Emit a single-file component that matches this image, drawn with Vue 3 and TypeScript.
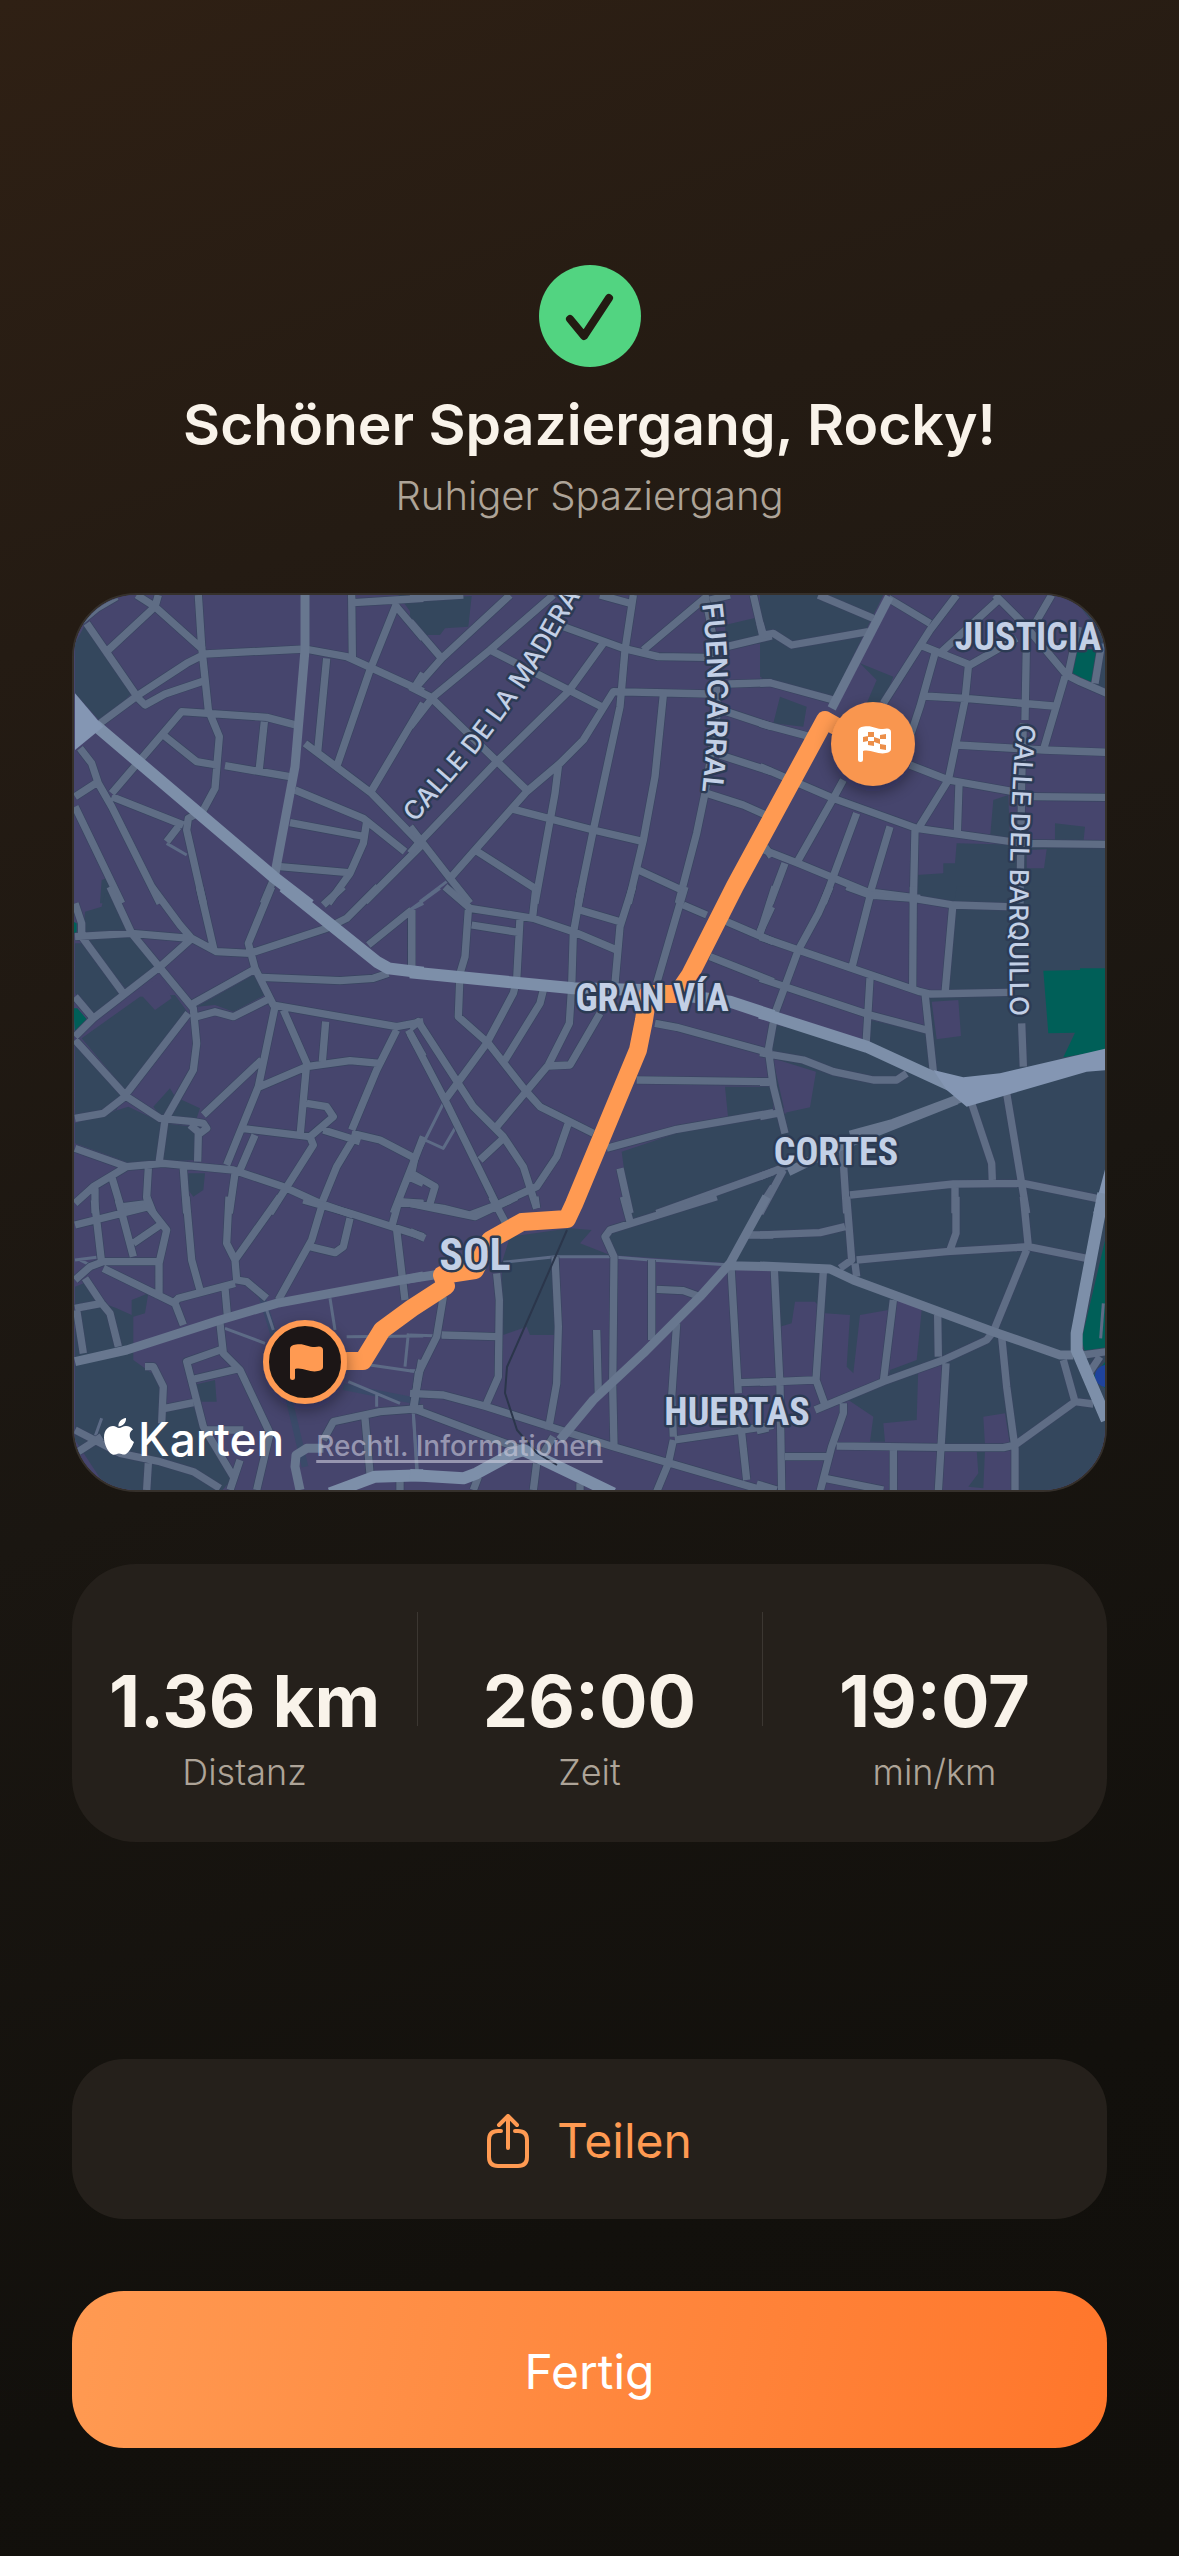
<script setup lang="ts">
interface Tile {
  x: number
  y: number
  slate: string
  block?: string
  park?: string
  dark?: string
  streets: string
  lanes?: string
  roads?: string
  avenues?: string
  plaza?: string
}

interface Stat {
  value: string
  label: string
}

// Every tile is drawn on a grid three times finer than the map itself.
const tiles: Tile[] = [
  {
    x: 60,
    y: 580,
    slate:
      'M45 190L75 135L215 340L125 430L45 340ZM1015 45H1090V150ZM125 900L150 890L185 970H120Z',
    streets:
      'M50 135L110 85L170 50M80 130L235 355L255 375L315 342L440 300M230 45L285 80L145 210M295 45L285 80L430 210M415 45L425 200L445 390L478 470L465 625L430 690L385 715L380 750L430 970M120 430L235 345L380 250L435 222L735 207L860 230L1090 335M875 45L877 230M800 235L773 515M880 68L1010 60L1090 55M1010 70L930 270L830 560M1005 75L1090 175M1090 370L930 640M1090 280L1065 320M735 490L935 640L1090 800M155 640L365 395L620 412L715 437M310 465L410 545L470 555M613 425L597 575M495 557L690 590M60 505L95 550L115 610L155 680L300 970M155 650L370 735M45 650L115 605M45 680L185 970M355 740L320 785M705 630L910 715L1035 815M690 728L905 768M920 725L910 790L870 880L805 970M660 860L865 878M640 900L610 970M1090 790L915 965',
    lanes: 'M320 790L380 825',
    roads: 'M735 45V210L705 560L645 880',
    avenues: 'M105 435L640 890L750 975',
    plaza: 'M45 340L130 440L45 510Z'
  },
  {
    x: 410,
    y: 580,
    slate:
      'M0 60L185 48L175 140L105 145L90 165L45 165L0 110ZM945 135L1050 110L1085 90V300H1055V190L950 200Z',
    streets:
      'M0 55L160 45M300 45L95 235L20 320M430 45L240 210L70 350L0 440M0 125L95 235M0 320L60 350L350 630M240 210L575 380M460 140L640 205L745 230L885 232M570 45L660 70M670 45L645 210L630 380L550 750L505 970M580 190L475 335L260 545L30 785L0 820M900 342L610 335L520 480L450 550L350 635L195 810L120 895M0 740L120 895L180 970M445 560L435 640L375 970M300 685L550 750L700 785M195 810L375 925M760 345L735 590L700 780L655 970M685 870L815 930M885 640L860 760L805 970M890 640L1000 675L1090 715M700 210L890 50M900 60L960 45M885 45L915 200L922 400L885 640M1030 45L1060 175M950 200L1085 168M955 312L1085 308M950 395L1085 440M930 525L1085 575M1065 800L1085 830',
    lanes: 'M110 905L30 965'
  },
  {
    x: 760,
    y: 580,
    slate:
      'M0 45H370L215 360L30 300L0 290ZM60 350L140 380L130 440L40 430ZM300 250L400 290L370 365L320 370L350 300ZM700 660L745 645L750 780L690 775ZM885 730L975 740L970 790H885ZM590 790L1040 800V970H470V885L550 880V850H585ZM955 75L1040 120V330L1000 310V130Z',
    block: 'M800 810L860 808L852 865H800Z',
    park: 'M950 205L1018 210L995 310L930 282Z',
    streets:
      'M175 45L340 115M0 130L10 165L40 160L95 195L325 155M0 310L30 308L220 360M0 430L150 470M0 560L220 655L470 745L790 790L1040 793M385 55L510 130M590 45L510 150L370 370M480 195L630 255L770 175M715 60L545 215M705 45L790 130L920 285L960 305L1040 340M875 45L820 140M800 150L795 420M955 140L925 280M1025 190L1005 310M525 220L480 380L450 470M625 260L615 360L565 600L475 745M490 348L615 355L880 378M915 290L850 510M590 495L850 510L1040 517M450 555L565 600L760 635M820 650L1040 652M597 610L592 760M790 430L785 600L780 970M250 600L220 655L115 840M290 700L190 970M390 740L330 940M465 750L460 970M0 805L115 850L320 935L480 955M75 850L30 970',
    roads: 'M388 50L215 385'
  },
  {
    x: 60,
    y: 890,
    slate:
      'M75 65L125 50L135 10L155 15L210 125L70 130ZM80 150L210 140L290 230L200 300ZM45 160H65L185 320L100 380L45 310ZM65 445L240 320L345 315L385 370L200 605ZM45 455L190 610L170 660L45 690ZM410 350L580 255L615 315L520 365L465 345ZM280 650L330 595L345 620L420 655L410 685L310 690ZM45 700L205 650L310 700L400 710L410 810L210 820L45 760ZM385 850H435L430 900L400 920L385 900Z',
    block: 'M235 305L300 255L335 325L285 360Z',
    park: 'M40 95L50 100V130H40ZM40 355H52L84 392L45 425Z',
    streets:
      'M150 -10L215 130L400 355L410 460L400 540L315 690L297 820M45 40L65 100L65 140L190 310M45 140L215 130L390 145M275 -10L360 105L395 145L470 185L570 190L800 115L860 85L955 -10M390 150L300 230L100 385L45 440M418 -10L462 180M635 -10L565 160L585 235L640 345L1010 410L1090 395M400 340L580 240M410 380L465 365L520 380L630 325M605 262L840 272L940 265L985 250M850 -10L790 45M1055 60L925 165M1055 60V235M45 320L100 385M45 450L200 620L300 685L400 695L430 700L440 715L420 730L390 705M45 685L130 670L195 620M385 370L200 610M605 510L430 675M645 350L595 590L500 825M670 360L740 520L720 740M600 590L740 530L870 512L960 520M797 395L787 515M1010 420L950 540L875 720M1045 420L1090 500M740 640L800 650L820 680L750 740L545 715M750 740L760 765L630 970M415 730L413 815M585 735L540 840M790 720L870 745L900 755M875 730L960 750L1065 805M875 755L830 830L785 940M45 775L200 830M45 940L100 890L200 830L310 820L520 840L670 890L780 940L880 975M105 895V970M155 860L188 970M265 835L260 920L280 970M190 950L265 940M370 835L380 970M525 850L508 970M1090 740L1065 805L1000 970M1045 860L1090 880M1020 935L1090 940',
    lanes: 'M1050 60L1090 40',
    avenues: 'M670 -10L950 215L985 235L1090 248'
  },
  {
    x: 410,
    y: 890,
    slate: 'M635 785L800 730L955 690L945 590H1090V970H660Z',
    streets:
      'M105 -10L180 55L370 85L490 125L620 180M378 -10L368 80M515 -10L490 130L485 290L478 400L415 525L260 710M668 -10L630 110L615 280M510 60L630 95M175 60L165 200L150 250L145 380L235 460L345 600L390 650L470 690L550 730M185 105L325 127M330 85L320 270L310 310L230 460L105 630M400 300L390 340L285 510M570 370L480 525L415 528M825 -10L810 40L740 280M820 45L890 75M950 95L1090 155M1085 50L1050 125M900 200L1090 275M735 400L800 412L1085 490M680 570L1085 575M590 775L800 718L1090 668M5 60V235M0 415L25 395L190 650L280 740L340 830L380 955M0 430L110 640L260 945M210 810L280 745M475 700L440 800L380 890L260 945M0 805L15 800L5 850L75 890L60 940M0 940L100 955L180 975L300 930M630 835L660 970M740 970L1090 845M1040 970L1090 890',
    lanes: 'M0 60L90 -5M100 640L45 750L100 775L135 715M45 750L10 820',
    avenues: 'M0 247L490 295L700 300L960 335L1090 378'
  },
  {
    x: 760,
    y: 890,
    slate:
      'M30 400L320 470L330 390L500 430L510 320L555 300L580 60L590 -10H1040V970H0V690L80 670L30 590Z',
    block: 'M38 505L168 545L150 652L75 668ZM515 335L595 330L603 438L530 448Z',
    park: 'M850 242L960 240V235H1040V480L910 502L945 428L865 430Z',
    streets:
      'M45 -10L0 130M210 -10L175 70L115 180L45 370L25 480L40 590L75 730M330 20L275 235M260 -10L330 15L460 25L580 45L740 50M460 -10L458 295M578 50L555 310M0 140L115 180L480 305L510 312L745 307M0 265L330 375L500 420M330 265L318 465M495 310L520 545M785 400L790 530M0 488L130 510L220 545L340 570L410 570L440 550M0 577H28M0 680L50 670M635 640L695 820L697 870M740 610L800 970M245 740L260 970M270 915L580 882L790 880L1010 925M585 890V970M0 860L100 820M70 840L0 970',
    roads: 'M85 845L250 765L590 630M270 735L400 700L600 625',
    avenues: 'M0 368L320 470L570 585',
    plaza:
      'M520 540L610 562L720 550L1040 475V540L980 545L620 650L560 600ZM1040 820L1000 970H1050Z'
  },
  {
    x: 60,
    y: 1200,
    slate:
      'M45 260L75 248L130 310L170 325L215 345V300L265 280L255 340L220 350V480L290 530L310 630L400 620L430 680L520 830L480 880H150L45 720ZM400 555L465 540L470 605H415Z',
    dark: 'M600 270L640 400L690 610L735 800M850 560L1080 605',
    streets:
      'M103 0L125 190M175 0L220 170M45 75L265 20L320 90L297 190V295M260 -10L265 20M45 240L90 200L130 185L300 185M220 130L300 75M378 -10L395 180L420 270M507 -10L500 130L525 180L530 240L560 245L620 295M660 -10L525 180M730 0L870 40L1090 110M785 20L755 120L655 300M750 140L825 158L850 140L870 55M1020 -10L995 80M1010 90L1035 300M1010 10H1090M130 205L345 310L370 375M345 305L355 295L525 250M495 265L502 345M75 235L125 310L150 340L175 440M45 325L125 310M50 330L70 460M480 370L490 460L540 510L630 700L590 870M480 450L380 485L430 680L520 830M390 540L540 505M255 500H280L310 560L305 670M315 625L400 608M45 690L180 760L300 785L400 815L480 865M265 790L260 870M55 755L125 710M430 690H550M540 780L510 870M1085 480L1060 620M790 720L820 665L960 635L1090 625M915 655L930 820M1020 830V870',
    lanes:
      'M495 385L615 430M810 295L825 390M860 410L1090 408M930 495L1090 518M1045 400L1035 500M865 545L1020 610M950 580V620M1060 640L1070 810M620 330L640 390M125 655L105 710M45 180L110 172M60 180L100 200',
    roads: 'M45 485L200 450L480 360L650 310L1090 228M790 745H740L708 765L705 800L720 870',
    avenues: 'M810 880L945 830L1090 826'
  },
  {
    x: 410,
    y: 1200,
    slate:
      'M275 190L300 110L480 85L545 90L510 130L600 165L435 170V405H360L350 380L280 405ZM660 0H1090V190H960L600 165L580 100L660 60Z',
    streets:
      'M0 10L195 50L320 -10M0 95L45 115M245 -10L285 65M375 -10L380 25M640 -10L660 65M920 -10L600 90L585 110L612 170L608 560L612 740M1010 105H1090M435 170L445 380L440 550L415 690M725 180V420M740 268L820 272L870 290M963 200L985 580M990 548L1090 545M800 370L785 590L790 710M260 220L268 300L265 530L230 610M100 290L80 410L25 520L10 640M95 405L260 410M560 390L565 580M0 580L100 585L230 620L420 680L610 740L1090 880M0 622L340 750M795 720L1090 676M790 720L775 790L740 875M995 700L1010 840M430 710L400 760M380 790L370 870M205 830L190 870M510 850V870',
    lanes:
      'M280 187L435 170H600L720 180L960 195M0 405L95 408M0 512H20M10 640L22 810',
    roads: 'M1070 -10L960 190L870 290L700 460L550 600L450 720M960 197L1090 200M-10 238L90 222',
    avenues: 'M0 825L160 835L200 820L310 760L340 750L610 880'
  },
  {
    x: 760,
    y: 1200,
    slate:
      'M0 0H1040V900H775L765 740L550 735V490L475 500L470 660L370 670L375 725H330L340 650L265 600L380 550L390 510L470 480L485 330L415 300L385 330L300 345L280 520L260 500L270 345L195 340L165 305H105L95 370L60 380L50 210L0 205ZM650 750H675L670 865L625 860L655 820Z',
    block: 'M670 650L735 640L750 735H675Z',
    park: 'M1040 100L965 420L975 455L1040 450ZM1000 530L1040 480V570Z',
    streets:
      'M0 105L180 98L255 80M260 -10L275 180L240 205M285 190L290 230M588 -10V100L570 150M790 -10L805 140M290 180L560 155L805 140L980 175M800 150L700 395L680 420L550 480L370 545L165 630M43 210L60 560L65 875M190 215L168 540L195 615M0 547L160 540M400 300L370 545M533 345L535 470M558 490L535 875M725 410L740 560L765 745V875M250 610V640L215 740L180 875M230 738L540 742L730 743L765 735L945 605L910 480M945 605L1000 612M75 770H210M400 750V875M195 835L370 870M-10 692L25 684M-10 852L50 870M970 465L1040 455M1020 470L980 530',
    lanes: 'M1030 310L1022 415',
    roads: 'M0 198L210 207L280 240L700 395L900 465H940',
    avenues: 'M1030 -20L950 400V450L1040 660'
  }
]

const stats: Stat[] = [
  { value: '1.36 km', label: 'Distanz' },
  { value: '26:00', label: 'Zeit' },
  { value: '19:07', label: 'min/km' }
]
</script>

<template>
  <main class="summary">
    <header class="intro">
      <svg class="badge" viewBox="0 0 102 102" aria-hidden="true">
        <circle cx="51" cy="51" r="51" fill="#52d481" />
        <path d="M31 54L45 71L70 33" fill="none" stroke="#231b12" stroke-width="8" stroke-linecap="round" stroke-linejoin="round" />
      </svg>
      <h1>Schöner Spaziergang, Rocky!</h1>
      <p>Ruhiger Spaziergang</p>
    </header>

    <section class="map" aria-label="Route">
      <svg class="canvas" viewBox="74 595 1031 895" preserveAspectRatio="xMidYMid slice">
        <defs>
          <filter id="shadow" x="-50%" y="-50%" width="200%" height="200%">
            <feDropShadow dx="0" dy="6" stdDeviation="8" flood-color="#10101c" flood-opacity="0.4" />
          </filter>
          <path id="madera" d="M415 823L479 750Q530 685 559 632L602 560" />
          <path id="fuencarral" d="M702 604Q714 700 700 810" />
          <path id="barquillo" d="M1017 724Q1006 850 1011 1060" />
        </defs>

        <rect x="60" y="580" width="1060" height="930" fill="#46456d" />
        <g v-for="t in tiles" :key="`ground-${t.x}-${t.y}`" :transform="`translate(${t.x} ${t.y}) scale(0.33333)`">
          <path :d="t.slate" fill="#34475d" />
          <path v-if="t.block" :d="t.block" fill="#46456d" />
          <path v-if="t.park" :d="t.park" fill="#005f58" />
          <path v-if="t.dark" :d="t.dark" fill="none" stroke="#3a4a69" stroke-width="20" />
        </g>
        <circle cx="1106" cy="1376" r="11" fill="#1f439c" />
        <g class="lines">
          <g v-for="t in tiles" :key="`lanes-${t.x}-${t.y}`" :transform="`translate(${t.x} ${t.y}) scale(0.33333)`">
            <path v-if="t.lanes" :d="t.lanes" stroke="#5d6b86" stroke-width="9" />
            <path :d="t.streets" stroke="#394560" stroke-width="26" />
          </g>
          <g v-for="t in tiles" :key="`streets-${t.x}-${t.y}`" :transform="`translate(${t.x} ${t.y}) scale(0.33333)`">
            <path :d="t.streets" stroke="#5f6d85" stroke-width="22" />
            <path v-if="t.roads" :d="t.roads" stroke="#68778f" stroke-width="27" />
          </g>
          <g v-for="t in tiles" :key="`avenues-${t.x}-${t.y}`" :transform="`translate(${t.x} ${t.y}) scale(0.33333)`">
            <path v-if="t.avenues" :d="t.avenues" stroke="#7d8fa9" stroke-width="36" />
            <path v-if="t.plaza" :d="t.plaza" class="plaza" />
          </g>
          <path d="M567 1230L533 1308L507 1367L505 1393L517 1430L537 1453L557 1465" stroke="#2b364b" stroke-width="2" />
        </g>

        <path
          d="M305 1361H363L382 1330L412 1308L446 1286L442 1275L475 1270L490 1240L522 1222L567 1219L574 1204L638 1050L644 1020L648 994H677L690 975L735 886L825 720L850 734"
          fill="none" stroke="#ff9a52" stroke-width="18" stroke-linejoin="round" />

        <g filter="url(#shadow)">
          <circle cx="305" cy="1362" r="39" fill="#1d1913" stroke="#ff9a52" stroke-width="6" />
          <circle cx="873" cy="744" r="42" fill="#f99650" />
        </g>
        <path d="M290 1349Q290 1345 296 1344.500C304 1343 308 1347 315 1347Q323 1345 323 1350V1367Q323 1370 318 1371C310 1373 303 1367 295 1369V1378Q295 1380 292.500 1380Q290 1380 290 1378Z" fill="#ff9a52" />
        <path d="M858 731Q858 727 864 726.500C872 725 876 729 883 729Q891 727 891 732V749Q891 752 886 753C878 755 871 749 863 751V760Q863 762 860.500 762Q858 762 858 760Z" fill="#fff" />
        <path d="M868 732H874V737H868ZM880 735L886 734V739H880ZM863 737L868 736V741L863 742ZM874 737L880 739V744L874 742ZM868 741H874V746L868 745ZM880 744L886 745V750L880 749Z" fill="#ec8f4a" />

        <g class="district" text-anchor="middle">
          <text x="1028" y="650">JUSTICIA</text>
          <text x="652" y="1011">GRAN VÍA</text>
          <text x="836" y="1165">CORTES</text>
          <text class="large" x="475" y="1270">SOL</text>
          <text x="737" y="1425">HUERTAS</text>
        </g>
        <g class="street">
          <text><textPath href="#madera">CALLE DE LA MADERA</textPath></text>
          <text class="bold"><textPath href="#fuencarral">FUENCARRAL</textPath></text>
          <text><textPath href="#barquillo">CALLE DEL BARQUILLO</textPath></text>
        </g>
      </svg>

      <div class="credits">
        <svg class="apple" viewBox="0 0 30 38" aria-hidden="true">
          <path d="M15 10C17 10 19 8 22 8C25 8 27.500 9.500 29 11.500C24 14.500 25 21.500 30 24C28.500 28 25.500 33.500 22 36C19.500 37.500 17.500 35.500 15 35.500C12.500 35.500 11 37.500 8.500 36.500C4 34.500 0 26 0 19.500C0 12 4.500 8 9 8C11.500 8 13.500 10 15 10ZM14.500 8.500C14 4 17.500 0.500 22 0C22.500 4.500 18.500 8.500 14.500 8.500Z" fill="#fff" />
        </svg>
        <span class="brand">Karten</span>
        <a href="#legal">Rechtl. Informationen</a>
      </div>
    </section>

    <dl class="stats">
      <div v-for="s in stats" :key="s.label" class="stat">
        <dt>{{ s.label }}</dt>
        <dd>{{ s.value }}</dd>
      </div>
    </dl>

    <footer class="actions">
      <button type="button" class="share">
        <svg class="share-icon" viewBox="0 0 42 54" aria-hidden="true">
          <path d="M14 17H11Q2 17 2 26V43Q2 52 11 52H31Q40 52 40 43V26Q40 17 31 17H28M21 34V3M12 11L21 2L30 11" fill="none" stroke="currentColor" stroke-width="4" stroke-linecap="round" stroke-linejoin="round" />
        </svg>
        Teilen
      </button>
      <button type="button" class="done">Fertig</button>
    </footer>
  </main>
</template>

<style>
body {
  margin: 0;
  background: #12100c;
}
</style>

<style scoped>
.summary {
  box-sizing: border-box;
  min-height: 100vh;
  padding: 265px 72px 108px;
  display: flex;
  flex-direction: column;
  gap: 72px;
  background: linear-gradient(160deg, #2f2014 0%, #241b13 22%, #1a1611 52%, #12100c 82%, #110f0b 100%);
  color: #f9f3ea;
  font-family: Inter, "Noto Sans", sans-serif;
}

.intro {
  display: flex;
  flex-direction: column;
  align-items: center;
  text-align: center;
}

.badge {
  width: 102px;
  height: 102px;
}

h1 {
  margin: 20px 0 0;
  font-size: 57px;
  line-height: 76px;
  font-weight: 600;
}

.intro p {
  margin: 8px 0 0;
  font-size: 40px;
  line-height: 50px;
  font-weight: 300;
  color: #aea498;
}

.map {
  position: relative;
  border: 2px solid #35302b;
  border-radius: 64px;
  overflow: hidden;
  background: #46456d;
}

.canvas {
  display: block;
  width: 100%;
}

.lines path {
  fill: none;
  stroke-linejoin: round;
}

.lines .plaza {
  fill: #8496b3;
}

.district text,
.street text {
  paint-order: stroke;
  stroke: #2c3b54;
  stroke-width: 5px;
  stroke-linejoin: round;
  fill: #c3d0e6;
}

.district text {
  font-family: "Roboto Condensed", "Liberation Sans Narrow", Roboto, sans-serif;
  font-size: 38px;
  font-weight: 700;
}

.district .large {
  font-size: 44px;
}

.street text {
  font-size: 26px;
  font-weight: 500;
}

.street .bold {
  font-size: 28px;
  font-weight: 600;
}

.credits {
  position: absolute;
  left: 30px;
  bottom: 22px;
  display: flex;
  align-items: baseline;
}

.apple {
  width: 30px;
  height: 38px;
}

.brand {
  margin-left: 4px;
  font-size: 46px;
  line-height: 50px;
  font-weight: 500;
  color: #fff;
}

.credits a {
  margin-left: 32px;
  padding-bottom: 4px;
  font-size: 28px;
  line-height: 36px;
  font-weight: 500;
  color: rgba(205, 205, 222, 0.6);
  text-decoration-thickness: 3px;
  text-underline-offset: 4px;
}

.stats {
  margin: 0;
  padding: 48px 0 44px;
  border-radius: 64px;
  background: #25201b;
  display: grid;
  grid-template-columns: repeat(3, 1fr);
}

.stat {
  position: relative;
  display: flex;
  flex-direction: column-reverse;
  align-items: center;
  padding-top: 44px;
}

.stat + .stat::before {
  content: "";
  position: absolute;
  left: 0;
  top: 0;
  width: 1px;
  height: 114px;
  background: #3c3732;
}

.stat dd {
  margin: 0;
  font-size: 72px;
  line-height: 90px;
  font-weight: 700;
}

.stat dt {
  font-size: 36px;
  line-height: 52px;
  font-weight: 300;
  color: #aea498;
}

.actions {
  margin-top: auto;
  display: flex;
  flex-direction: column;
  gap: 72px;
}

button {
  box-sizing: border-box;
  border: 0;
  padding: 4px 0 0;
  border-radius: 52px;
  display: flex;
  align-items: center;
  justify-content: center;
  gap: 28px;
  font-family: inherit;
  font-size: 48px;
  line-height: 60px;
  font-weight: 400;
}

.share {
  height: 160px;
  background: #25201b;
  color: #ff9a52;
}

.share-icon {
  width: 42px;
  height: 54px;
}

.done {
  height: 157px;
  background: linear-gradient(100deg, #ff9a52, #ff762b);
  color: #fff;
}
</style>
